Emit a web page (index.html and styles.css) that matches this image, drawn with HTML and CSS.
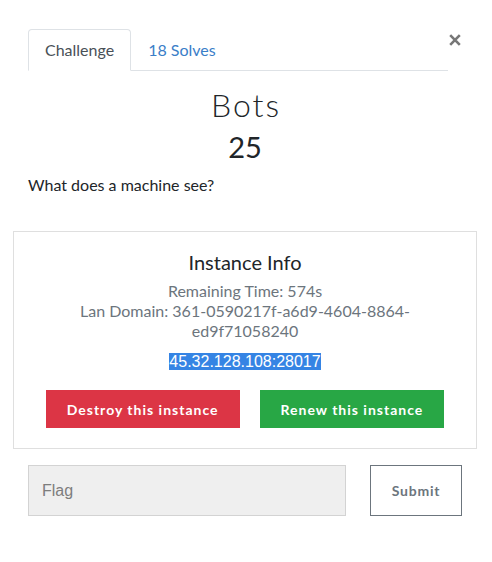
FILE: index.html
```html
<!DOCTYPE html>
<html lang="en">
<head>
<meta charset="utf-8">
<title>Bots</title>
<link rel="stylesheet" href="styles.css">
</head>
<body>
<div class="modal">
  <button class="close" aria-label="Close">
    <svg width="12" height="12" viewBox="0 0 12 12"><path d="M1.2 1.2L10.8 10.8M10.8 1.2L1.2 10.8" stroke="#777" stroke-width="2.6" stroke-linecap="butt"/></svg>
  </button>
  <ul class="tabs">
    <li class="tab active">Challenge</li>
    <li class="tab">18 Solves</li>
  </ul>
  <h2 class="title">Bots</h2>
  <h3 class="value">25</h3>
  <p class="desc">What does a machine see?</p>
  <div class="card">
    <h5 class="card-title">Instance Info</h5>
    <div class="info">
      <p>Remaining Time: 574s</p>
      <p>Lan Domain: 361-0590217f-a6d9-4604-8864-ed9f71058240</p>
    </div>
    <p class="ip"><span>45.32.128.108:28017</span></p>
    <div class="actions">
      <button class="btn btn-danger">Destroy this instance</button>
      <button class="btn btn-success">Renew this instance</button>
    </div>
  </div>
  <form class="flag-row">
    <input class="flag-input" type="text" placeholder="Flag">
    <button class="submit" type="button">Submit</button>
  </form>
</div>
</body>
</html>
```
FILE: styles.css
```css
body {
  margin: 0;
  font-family: Lato, "Open Sans", sans-serif;
  color: #212529;
  background: #fff;
}

.modal {
  position: relative;
  width: 464px;
  margin-left: 13px;
  padding-top: 29px;
}

.close {
  position: absolute;
  top: 34px;
  left: 436px;
  width: 12px;
  height: 12px;
  padding: 0;
  border: 0;
  background: none;
  line-height: 0;
}

.tabs {
  display: flex;
  margin: 0 29px 0 15px;
  padding: 0;
  list-style: none;
  border-bottom: 1px solid #dee2e6;
}

.tab {
  padding: 9px 16px;
  line-height: 22px;
  font-size: 16px;
  border: 1px solid transparent;
  border-radius: 4px 4px 0 0;
  margin-bottom: -1px;
  color: #3a7ec8;
}

.tab.active {
  color: #495057;
  background: #fff;
  border-color: #dee2e6 #dee2e6 #fff;
}

.title {
  margin: 15px 0 0;
  font-size: 32px;
  font-weight: 300;
  line-height: 1.2;
  text-align: center;
  letter-spacing: 2px;
  text-indent: 2px;
}

.value {
  margin: 6px 0 0;
  font-size: 29px;
  font-weight: 400;
  line-height: 1.2;
  text-align: center;
}

.desc {
  margin: 8px 15px 0;
  font-size: 16px;
  line-height: 24px;
}

.card {
  margin-top: 34px;
  border: 1px solid #dfdfdf;
  padding: 18px 20px 20px;
  text-align: center;
}

.card-title {
  margin: 0;
  font-size: 20px;
  font-weight: 400;
  line-height: 24px;
}

.info {
  margin-top: 7px;
  font-size: 16px;
  line-height: 20px;
  color: #6c757d;
}

.info p {
  margin: 0;
}

.ip {
  margin: 9px 0 0;
  font-family: "Liberation Sans", Arial, sans-serif;
  font-size: 16px;
  line-height: 24px;
}

.ip span {
  background: #3584e4;
  color: #fff;
}

.actions {
  margin-top: 16px;
  display: flex;
  justify-content: center;
  gap: 20px;
}

.btn {
  height: 38px;
  padding: 0 21px;
  border: 0;
  border-radius: 0;
  color: #fff;
  font-family: Lato, sans-serif;
  font-weight: 700;
  font-size: 14px;
  letter-spacing: 1px;
}

.btn-danger {
  background: #dc3545;
}

.btn-success {
  background: #28a745;
}

.flag-row {
  margin: 16px 0 0;
  padding: 0 15px;
  display: flex;
  gap: 24px;
}

.flag-input {
  box-sizing: border-box;
  width: 318px;
  height: 51px;
  margin: 0;
  padding: 0 13px;
  background: #efefef;
  border: 1px solid #d3d3d3;
  border-radius: 0;
  font-family: "Liberation Sans", Arial, sans-serif;
  font-size: 16px;
  color: #495057;
}

.flag-input::placeholder {
  color: #7d7d7d;
}

.submit {
  box-sizing: border-box;
  width: 92px;
  height: 51px;
  margin: 0;
  padding: 0;
  background: #fff;
  border: 1px solid #6c757d;
  border-radius: 0;
  color: #6c757d;
  font-family: Lato, sans-serif;
  font-weight: 700;
  font-size: 14px;
  letter-spacing: 0.8px;
}
```
